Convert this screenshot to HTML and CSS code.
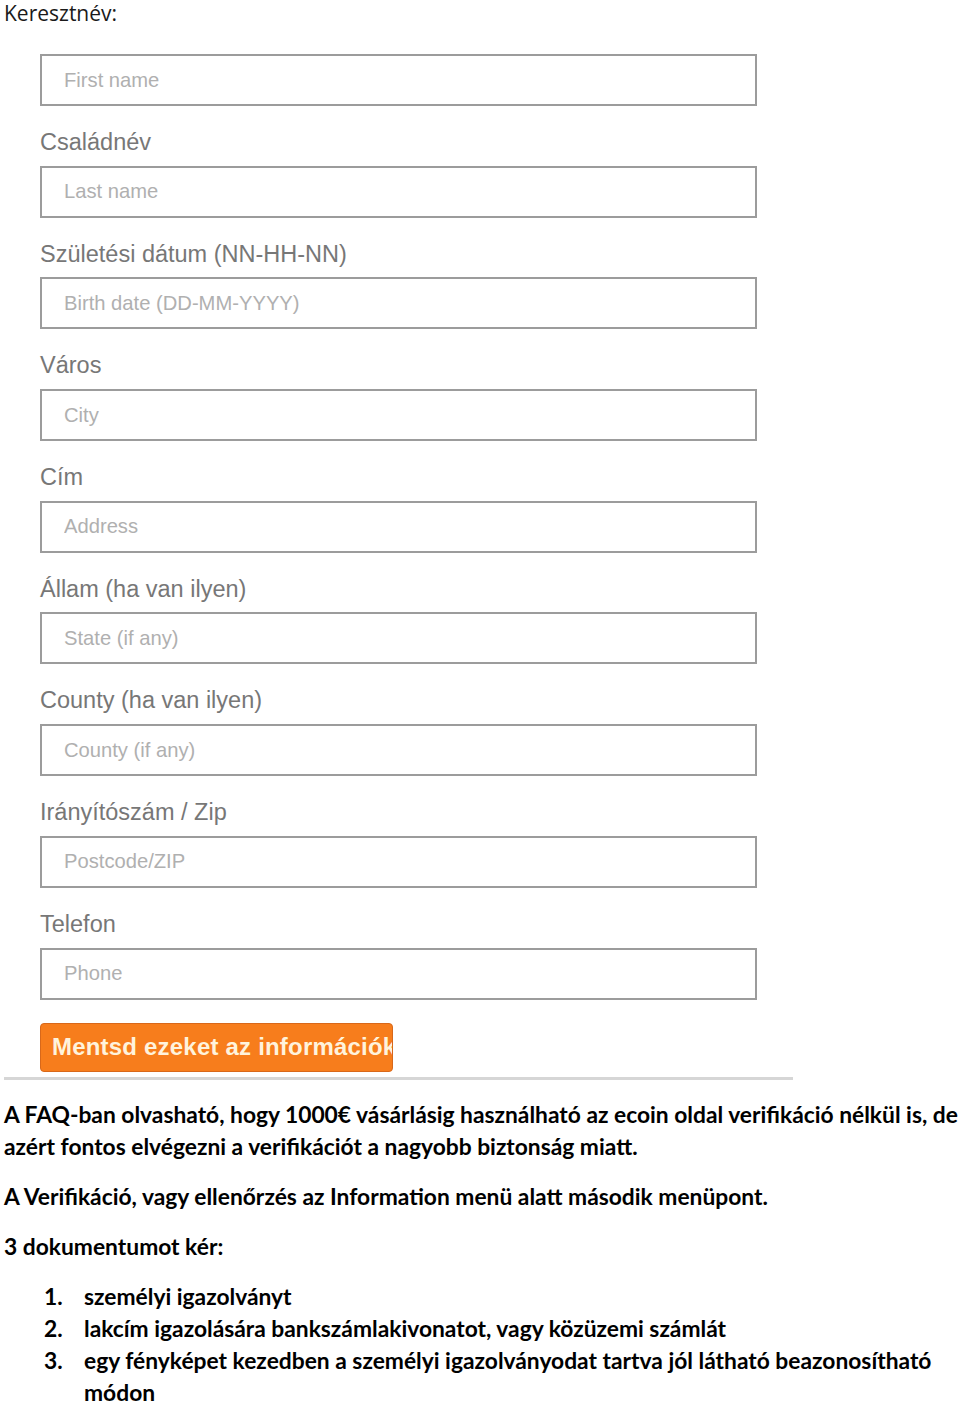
FILE: index.html
```html
<!DOCTYPE html>
<html lang="hu">
<head>
<meta charset="utf-8">
<title>Verifikáció</title>
<link rel="stylesheet" href="styles.css">
</head>
<body>
<p class="intro">Keresztnév:</p>
<form class="signup">
  <div class="field first"><input type="text" placeholder="First name"></div>
  <div class="field"><label>Családnév</label><input type="text" placeholder="Last name"></div>
  <div class="field"><label>Születési dátum (NN-HH-NN)</label><input type="text" placeholder="Birth date (DD-MM-YYYY)"></div>
  <div class="field"><label>Város</label><input type="text" placeholder="City"></div>
  <div class="field"><label>Cím</label><input type="text" placeholder="Address"></div>
  <div class="field"><label>Állam (ha van ilyen)</label><input type="text" placeholder="State (if any)"></div>
  <div class="field"><label>County (ha van ilyen)</label><input type="text" placeholder="County (if any)"></div>
  <div class="field"><label>Irányítószám / Zip</label><input type="text" placeholder="Postcode/ZIP"></div>
  <div class="field"><label>Telefon</label><input type="text" placeholder="Phone"></div>
  <button type="button" class="save">Mentsd ezeket az információkat</button>
</form>
<div class="rule"></div>
<div class="article">
  <p>A FAQ-ban olvasható, hogy 1000€ vásárlásig használható az ecoin oldal verifikáció nélkül is, de azért fontos elvégezni a verifikációt a nagyobb biztonság miatt.</p>
  <p>A Verifikáció, vagy ellenőrzés az Information menü alatt második menüpont.</p>
  <p>3 dokumentumot kér:</p>
  <ol>
    <li>személyi igazolványt</li>
    <li>lakcím igazolására bankszámlakivonatot, vagy közüzemi számlát</li>
    <li>egy fényképet kezedben a személyi igazolványodat tartva jól látható beazonosítható módon</li>
  </ol>
</div>
</body>
</html>
```
FILE: styles.css
```css
html, body {
  margin: 0;
  padding: 0;
  background: #ffffff;
}
body {
  padding: 0 0 0 4px;
  font-family: Lato, "Open Sans", sans-serif;
  color: #000;
  overflow-x: hidden;
}
.intro {
  margin: 0;
  font-family: "Open Sans", Lato, sans-serif;
  font-size: 21px;
  line-height: 26px;
  color: #1a1a1a;
}
.signup {
  margin: 28px 0 0 36px;
  width: 717px;
  display: flex;
  flex-direction: column;
}
.field {
  display: flex;
  flex-direction: column;
}
.field label {
  font-family: "Liberation Sans", Arial, sans-serif;
  font-size: 23.5px;
  line-height: 24px;
  color: #777777;
  margin: 24px 0 11.7px 0;
}
.field input {
  box-sizing: border-box;
  height: 52px;
  width: 717px;
  border: 2px solid #9c9c9c;
  padding: 0 0 0 22px;
  font-family: "Liberation Sans", Arial, sans-serif;
  font-size: 20.2px;
  color: #444;
  background: #fff;
  outline: none;
}
.field input::placeholder {
  color: #b0b0b0;
}
.save {
  margin-top: 23px;
  box-sizing: border-box;
  width: 353px;
  height: 49px;
  padding: 0 0 0 11px;
  text-align: left;
  white-space: nowrap;
  overflow: hidden;
  background: #f77d1c;
  border: 1px solid #d8681a;
  border-radius: 4px;
  font-family: "Liberation Sans", Arial, sans-serif;
  font-weight: bold;
  font-size: 24px;
  letter-spacing: 0.2px;
  color: #fff3dc;
}
.rule {
  margin-top: 5px;
  width: 789px;
  height: 3px;
  background: #d6d6d6;
}
.article {
  font-family: Lato, "Open Sans", sans-serif;
  font-weight: 700;
  font-size: 22.8px;
  line-height: 32px;
  color: #000;
  padding-top: 18px;
}
.article p {
  margin: 0 0 18px 0;
}
.article ol {
  margin: 0 0 0 40px;
  padding: 0;
  list-style: none;
  counter-reset: item;
}
.article li {
  counter-increment: item;
  display: flex;
  padding-right: 20px;
}
.article li::before {
  content: counter(item) ".";
  flex: 0 0 40px;
}
```
